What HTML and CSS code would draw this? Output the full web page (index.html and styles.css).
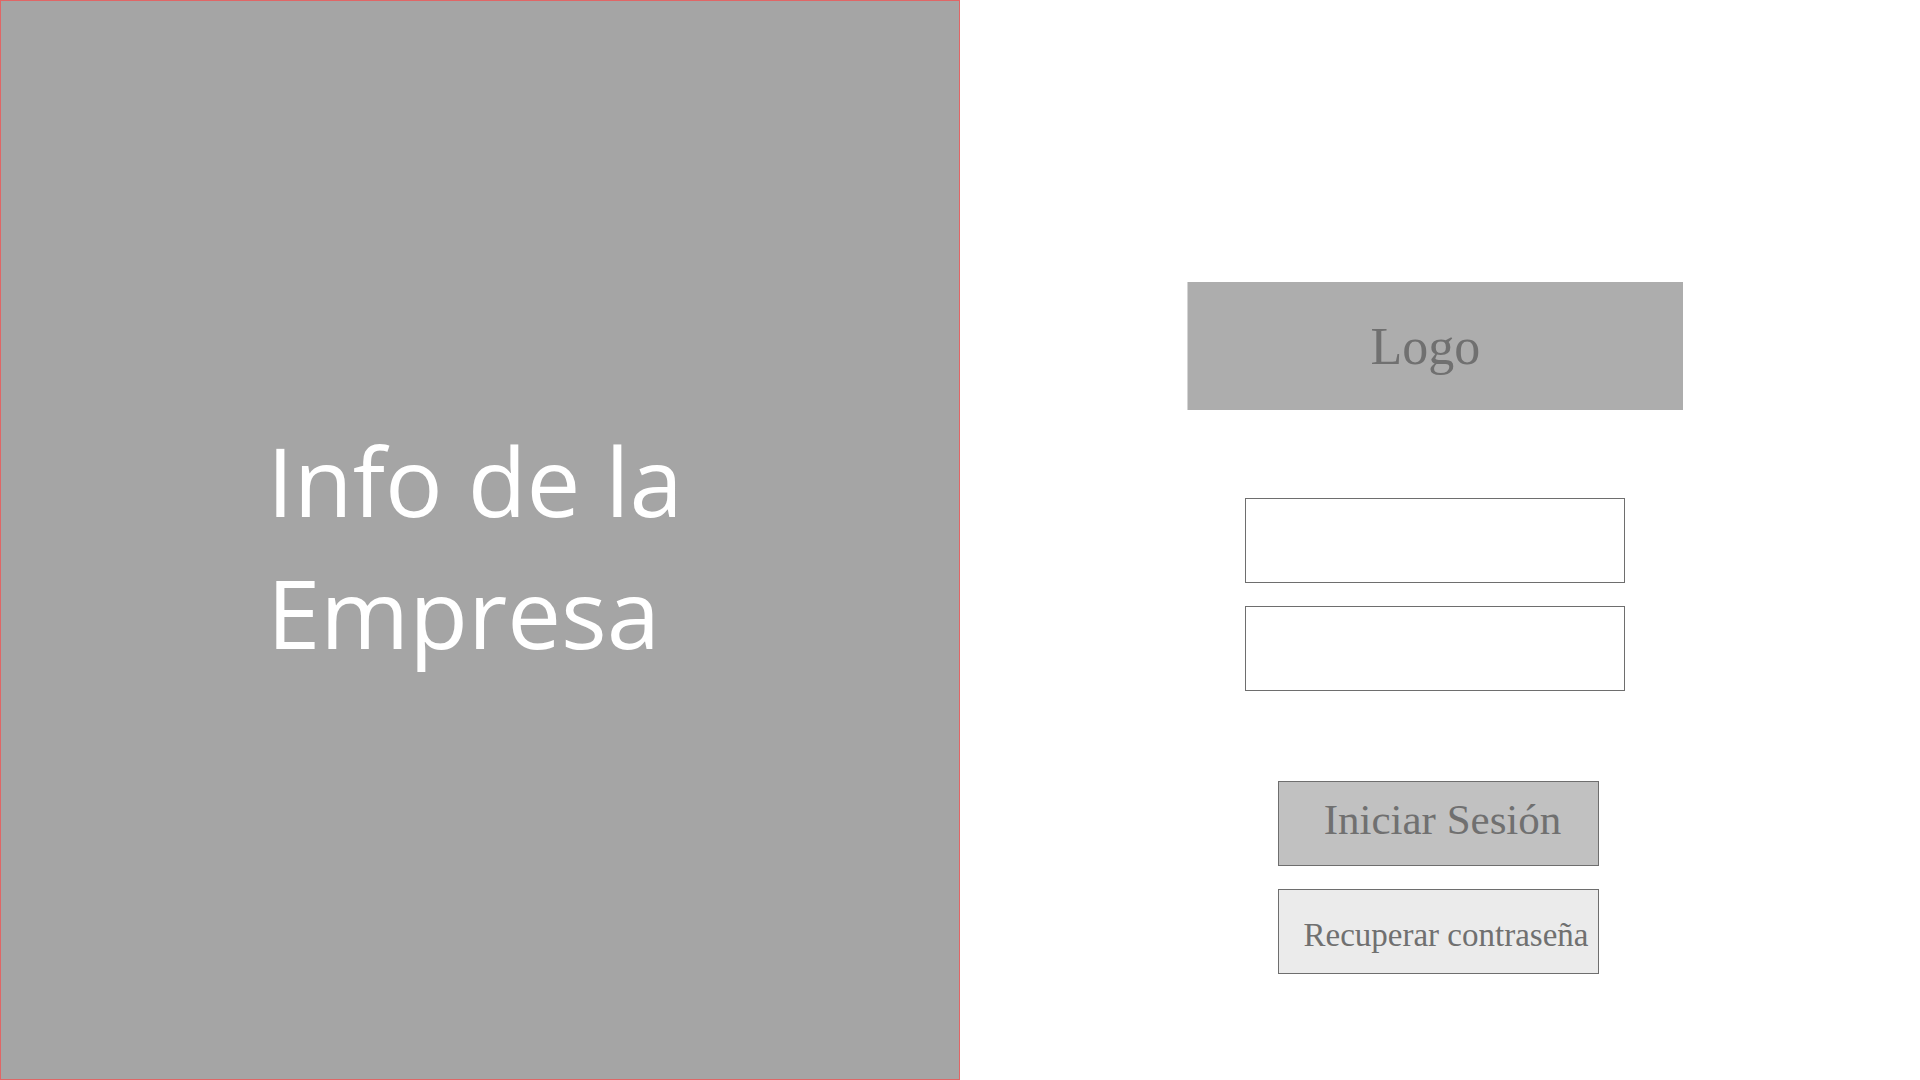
FILE: index.html
```html
<!DOCTYPE HTML>
<html>
<head>
<meta charset="utf-8">
<title>Iniciar Sesión</title>
<link rel="stylesheet" href="styles.css">
</head>
<body>
	<div class="page">
		<div class="info">
			<h1 class="info-title">Info de la<br>Empresa</h1>
		</div>

		<div class="login">
			<div class="logo"><span>Logo</span></div>

			<form class="login-form">
				<input class="field" type="text">
				<input class="field" type="password">

				<div class="actions">
					<button type="button" class="btn btn-main"><span>Iniciar Sesión</span></button>
					<button type="button" class="btn btn-alt"><span>Recuperar contraseña</span></button>
				</div>
			</form>
		</div>
	</div>
</body>
</html>
```

FILE: styles.css
```css
html, body {
	margin: 0;
	padding: 0;
	background: #fff;
}

.page {
	display: flex;
	width: 1920px;
	height: 1080px;
}

.info {
	box-sizing: border-box;
	width: 960px;
	height: 1080px;
	background: #a5a5a5;
	border: 1px solid #e06666;
	display: flex;
	align-items: center;
	padding-left: 266px;
	padding-top: 12px;
}

.info-title {
	margin: 0;
	color: #fff;
	font-family: "Open Sans", "Noto Sans", sans-serif;
	font-weight: normal;
	font-size: 96px;
	line-height: 132px;
}

.login {
	flex: 1;
	display: flex;
	flex-direction: column;
	align-items: center;
	padding-top: 282px;
	font-family: "Liberation Serif", serif;
	color: #707070;
}

.logo {
	box-sizing: border-box;
	width: 496px;
	height: 128px;
	margin-left: -10px;
	background: #adadad;
	border-left: 1px solid #d4d4d4;
	display: flex;
	align-items: center;
	justify-content: center;
	padding-right: 20px;
	font-size: 52px;
}

.login-form {
	margin: 88px 0 0;
	display: flex;
	flex-direction: column;
	align-items: center;
	margin-left: -10px;
}

.field {
	box-sizing: border-box;
	display: block;
	width: 380px;
	height: 85px;
	margin: 0 0 23px;
	padding: 0;
	border: 1px solid #6e6e6e;
	background: #fff;
	outline: none;
}

.actions {
	display: flex;
	flex-direction: column;
	align-items: center;
	margin-top: 67px;
	margin-left: 7px;
}

.btn {
	box-sizing: border-box;
	display: flex;
	align-items: center;
	justify-content: center;
	width: 321px;
	height: 85px;
	margin: 0 0 23px;
	padding: 0;
	border: 1px solid #6e6e6e;
	font-family: "Liberation Serif", serif;
	color: #707070;
	cursor: pointer;
}

.btn-main {
	background: #c1c1c1;
	font-size: 43px;
	padding-left: 8px;
	padding-bottom: 8px;
}

.btn-alt {
	background: #ebebeb;
	font-size: 33px;
	padding-left: 15px;
	padding-top: 8px;
}
```
